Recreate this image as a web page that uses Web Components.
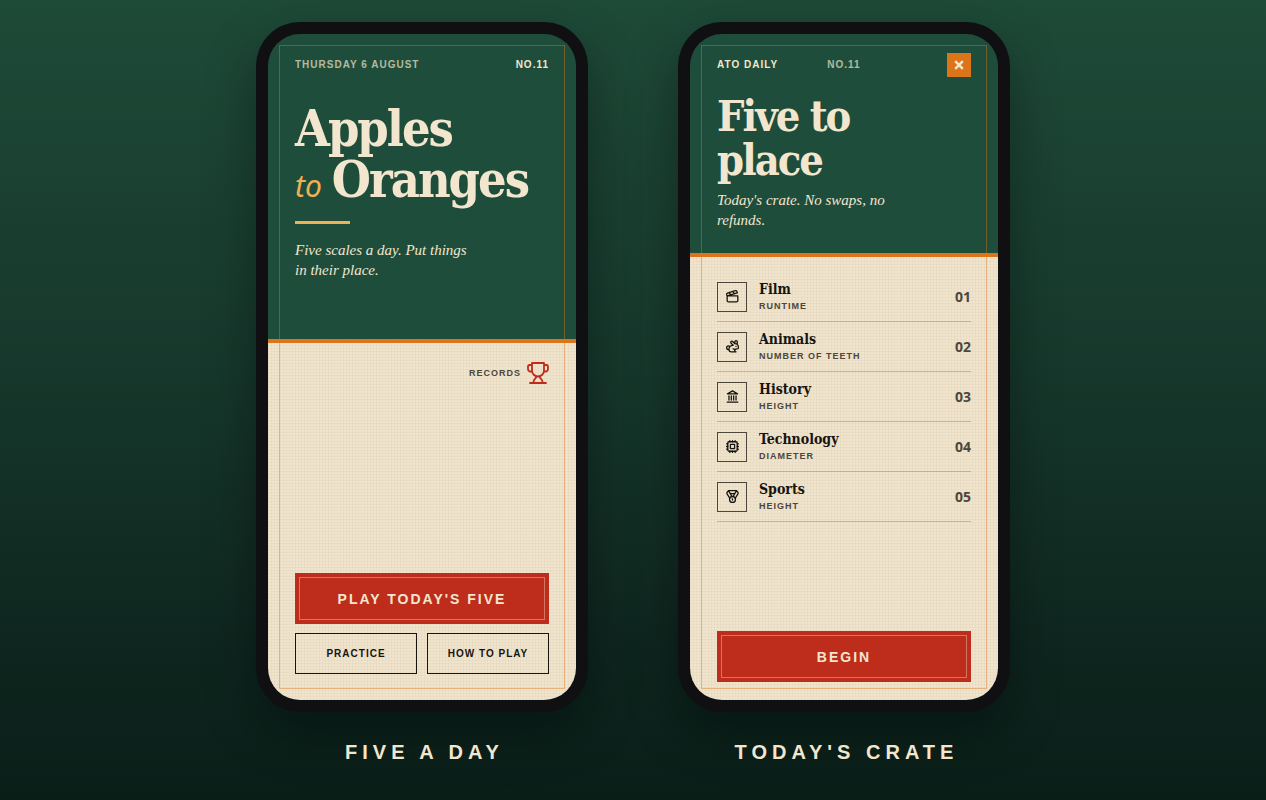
<!DOCTYPE html>
<html lang="en">
<head>
    <meta charset="UTF-8">
    <meta name="viewport" content="width=device-width, initial-scale=1.0">
    <title>Apples to Oranges</title>
    <style>
        :root {
            --green: #1f4d3b;
            --cream: #f2e6cf;
            --paper: #f0e4cd;
            --orange: #dc751a;
            --amber: #f0b055;
            --red: #be2d1b;
            --ink: #17140f;
            --soft: #4d463c;
            --slab: "DejaVu Serif Condensed", "DejaVu Serif", serif;
            --text: "Liberation Serif", serif;
            --sans: "Liberation Sans", sans-serif;
            --num: "Noto Sans", sans-serif;
        }
        body {
            margin: 0;
            min-height: 100vh;
            font-family: var(--sans);
            color: var(--cream);
            background: linear-gradient(180deg, #1e4a38 0%, #17382c 45%, #0e261f 80%, #0a1e18 100%);
        }
        .dim { opacity: .7; }
    </style>
</head>
<body>
    <template id="tmpl-showcase">
        <style>
            :host {
                display: grid;
                grid-template-columns: repeat(auto-fit, minmax(280px, 332px));
                justify-content: center;
                gap: 40px 90px;
                padding: 22px 24px 36px;
            }
        </style>
        <slot></slot>
    </template>

    <template id="tmpl-phone">
        <style>
            :host { display: block; }
            figure { margin: 0; }
            .body {
                box-sizing: border-box;
                aspect-ratio: 332 / 690;
                padding: 12px;
                border-radius: 44px;
                background: #101012;
                box-shadow: 0 20px 50px rgba(0, 0, 0, .35);
            }
            .screen {
                position: relative;
                display: flex;
                flex-direction: column;
                height: 100%;
                overflow: hidden;
                border-radius: 32px;
            }
            .screen::after {
                content: "";
                position: absolute;
                inset: 11px;
                border: 1px solid rgba(220, 117, 26, .45);
                pointer-events: none;
            }
            figcaption {
                padding: 28px 0 0 5px;
                text-align: center;
                font: bold 20px/24px var(--sans);
                letter-spacing: 5px;
                text-transform: uppercase;
            }
        </style>
        <figure>
            <div class="body"><div class="screen"><slot></slot></div></div>
            <figcaption></figcaption>
        </figure>
    </template>

    <template id="tmpl-hero">
        <style>
            :host {
                display: block;
                box-sizing: border-box;
                padding: 19px 27px 0;
                background: var(--green);
                border-bottom: 4px solid var(--orange);
                color: var(--cream);
            }
            .bar {
                display: flex;
                align-items: center;
                justify-content: space-between;
                height: 24px;
                font: bold 10px/12px var(--sans);
                letter-spacing: 1px;
            }
            :host([size="large"]) { height: 309px; }
            :host([size="small"]) { height: 223px; }
            :host([size="small"]) .bar {
                display: grid;
                grid-template-columns: 1fr auto 1fr;
            }
            :host([size="large"]) .title { padding-top: 26px; }
            :host([size="small"]) .title { padding-top: 17px; }
        </style>
        <div class="bar"><slot name="bar"></slot></div>
        <div class="title"><slot></slot></div>
    </template>

    <template id="tmpl-title">
        <style>
            :host { display: block; }
            h1 {
                margin: 0;
                font: bold 50px/51px var(--slab);
                letter-spacing: -2px;
            }
            h2 {
                margin: 0 0 8px;
                font: bold 43px/44px var(--slab);
                letter-spacing: -2px;
            }
            span { display: flex; align-items: baseline; gap: 10px; white-space: nowrap; }
            h2 span { display: block; }
            i {
                font: italic 30px/30px var(--num);
                color: var(--amber);
                letter-spacing: 0;
            }
            hr {
                width: 55px;
                height: 3px;
                margin: 16px 0;
                border: 0;
                background: var(--amber);
            }
            p {
                margin: 0;
                max-width: 180px;
                font: italic 15px/20px var(--text);
            }
        </style>
        <div></div>
    </template>

    <template id="tmpl-row">
        <style>
            :host {
                display: grid;
                grid-template-columns: 30px 1fr auto;
                column-gap: 12px;
                align-items: center;
                height: 49px;
                border-bottom: 1px solid rgba(60, 50, 40, .25);
                color: var(--ink);
            }
            .icon {
                display: grid;
                place-items: center;
                height: 28px;
                border: 1px solid var(--soft);
            }
            h3 { margin: 0; font: bold 14px/19px var(--slab); }
            p {
                margin: 0;
                font: bold 9px/15px var(--sans);
                letter-spacing: 1px;
                color: var(--soft);
                text-transform: uppercase;
            }
            b { font: bold 14px/20px var(--num); color: var(--soft); }
        </style>
        <div class="icon"><ui-icon></ui-icon></div>
        <div><h3></h3><p></p></div>
        <b></b>
    </template>

    <template id="tmpl-button">
        <style>
            :host { display: block; flex: 1; }
            button {
                display: block;
                box-sizing: border-box;
                width: 100%;
                height: 41px;
                padding: 0;
                border: 1px solid var(--ink);
                background: none;
                color: var(--ink);
                font: bold 10px/12px var(--sans);
                letter-spacing: 1px;
                text-transform: uppercase;
            }
            :host([primary]) button {
                height: 51px;
                border: 0;
                background: var(--red);
                outline: 1px solid rgba(242, 230, 207, .4);
                outline-offset: -5px;
                color: var(--cream);
                font: bold 14px/16px var(--sans);
                letter-spacing: 2px;
            }
            :host([close]) { flex: none; justify-self: end; }
            :host([close]) button {
                display: grid;
                place-items: center;
                width: 24px;
                height: 24px;
                border: 0;
                background: var(--orange);
                color: var(--cream);
            }
        </style>
        <button type="button"><slot></slot></button>
    </template>

    <template id="tmpl-panel">
        <style>
            :host {
                display: flex;
                flex: 1;
                flex-direction: column;
                justify-content: space-between;
                padding: 15px 27px 18px;
                background:
                    repeating-linear-gradient(0deg, rgba(110, 80, 30, .04) 0 1px, transparent 1px 3px),
                    repeating-linear-gradient(90deg, rgba(110, 80, 30, .04) 0 1px, transparent 1px 3px),
                    var(--paper);
            }
            :host([home]) { padding: 19px 27px 26px; }
            .actions { display: grid; gap: 9px; }
        </style>
        <div><slot></slot></div>
        <div class="actions"><slot name="actions"></slot></div>
    </template>

    <template id="tmpl-records">
        <style>
            :host { display: flex; justify-content: flex-end; }
            a {
                display: flex;
                align-items: center;
                gap: 6px;
                color: var(--soft);
                font: bold 9px/12px var(--sans);
                letter-spacing: 1px;
                text-decoration: none;
            }
            ui-icon { color: var(--red); }
        </style>
        <a href="#records"><slot></slot><ui-icon name="trophy" size="22"></ui-icon></a>
    </template>

    <template id="tmpl-pair">
        <style>
            :host { display: flex; gap: 10px; }
        </style>
        <slot></slot>
    </template>

    <ato-showcase>
        <ato-phone caption="Five a day">
            <ato-hero size="large">
                <span slot="bar" class="dim">THURSDAY 6 AUGUST</span>
                <span slot="bar">NO.11</span>
                <ato-title kind="cover" lede="Five scales a day. Put things in their place."></ato-title>
            </ato-hero>
            <ato-panel home>
                <ato-records>RECORDS</ato-records>
                <ato-button slot="actions" primary>Play today's five</ato-button>
                <ato-pair slot="actions">
                    <ato-button>Practice</ato-button>
                    <ato-button>How to play</ato-button>
                </ato-pair>
            </ato-panel>
        </ato-phone>

        <ato-phone caption="Today's crate">
            <ato-hero size="small">
                <span slot="bar">ATO DAILY</span>
                <span slot="bar" class="dim">NO.11</span>
                <ato-button slot="bar" close label="Close"><ui-icon name="close" size="12"></ui-icon></ato-button>
                <ato-title lede="Today's crate. No swaps, no refunds."></ato-title>
            </ato-hero>
            <ato-panel>
                <ato-row icon="film" name="Film" measure="Runtime" number="01"></ato-row>
                <ato-row icon="rabbit" name="Animals" measure="Number of teeth" number="02"></ato-row>
                <ato-row icon="landmark" name="History" measure="Height" number="03"></ato-row>
                <ato-row icon="chip" name="Technology" measure="Diameter" number="04"></ato-row>
                <ato-row icon="medal" name="Sports" measure="Height" number="05"></ato-row>
                <ato-button slot="actions" primary>Begin</ato-button>
            </ato-panel>
        </ato-phone>
    </ato-showcase>
</body>
<script>
    const icons = {
        close: '<path d="M5 5l14 14M19 5L5 19" stroke-width="4.5" stroke-linecap="butt"/>',
        trophy: '<path stroke-width="1.8" d="M6 2h12v7.500a6 6 0 0 1-12 0zM6 4H3.500A1.500 1.500 0 0 0 2 5.500V8a2.500 2.500 0 0 0 2.500 2.500H6M18 4h2.500A1.500 1.500 0 0 1 22 5.500V8a2.500 2.500 0 0 1-2.500 2.500H18M10.300 15.500c0 2.500-3 2.500-3 6M13.700 15.500c0 2.500 3 2.500 3 6M4 22h16"/>',
        film: '<path d="M20.200 6L3 11l-.9-2.400c-.3-1.100.3-2.200 1.300-2.500l13.500-4c1.100-.3 2.200.3 2.500 1.300zM6.200 5.300l3.100 3.900M12.400 3.400l3.100 4M3 11h18v8a2 2 0 0 1-2 2H5a2 2 0 0 1-2-2z"/>',
        rabbit: '<path d="M13 16a3 3 0 0 1 2.240 5M18 12h.01M18 21h-8a4 4 0 0 1-4-4 7 7 0 0 1 7-7h.2L9.600 6.400a1 1 0 1 1 2.800-2.800L15.800 7h.2c3.300 0 6 2.700 6 6v1a2 2 0 0 1-2 2h-1a3 3 0 0 0-3 3M20 8.540V4a2 2 0 1 0-4 0v3M7.612 12.524a3 3 0 1 0-1.600 4.300"/>',
        landmark: '<path d="M3 21.500h18M6 18v-7M10 18v-7M14 18v-7M18 18v-7M12 2.500l8.500 5h-17z"/>',
        chip: '<rect x="4" y="4" width="16" height="16" rx="2"/><rect x="8.500" y="8.500" width="7" height="7"/><path d="M7.500 2v2M12 2v2M16.500 2v2M7.500 20v2M12 20v2M16.500 20v2M2 7.500h2M2 12h2M2 16.500h2M20 7.500h2M20 12h2M20 16.500h2"/>',
        medal: '<path d="M7.210 15L2.660 7.140a2 2 0 0 1 .13-2.200L4.400 2.800A2 2 0 0 1 6 2h12a2 2 0 0 1 1.600.8l1.600 2.140a2 2 0 0 1 .14 2.200L16.790 15M11 12L5.120 2.200M13 12l5.880-9.800M8 7h8"/><circle cx="12" cy="17" r="5"/><path d="M12 18v-2h-.5"/>'
    };

    const stamp = (el, id) => {
        const root = el.attachShadow({mode: 'open'});
        root.append(document.getElementById(id).content.cloneNode(true));
        return root;
    };

    const define = (name, id) => {
        customElements.define(name, class extends HTMLElement {
            connectedCallback() {
                stamp(this, id);
            }
        });
    };

    customElements.define('ui-icon', class extends HTMLElement {
        connectedCallback() {
            const size = this.getAttribute('size') || 13;
            this.attachShadow({mode: 'open'}).innerHTML = `
              <style>
              :host { display: block; }
              svg { display: block; }
              </style>
              <svg width="${size}" height="${size}" viewBox="1 1 22 22" fill="none" stroke="currentColor"
                stroke-width="2.200" stroke-linecap="round" stroke-linejoin="round" overflow="visible" aria-hidden="true">
                ${icons[this.getAttribute('name')] || ''}
              </svg>
            `;
        }
    });

    define('ato-showcase', 'tmpl-showcase');
    define('ato-hero', 'tmpl-hero');
    define('ato-panel', 'tmpl-panel');
    define('ato-records', 'tmpl-records');
    define('ato-pair', 'tmpl-pair');

    customElements.define('ato-phone', class extends HTMLElement {
        connectedCallback() {
            stamp(this, 'tmpl-phone').querySelector('figcaption').textContent = this.getAttribute('caption');
        }
    });

    customElements.define('ato-title', class extends HTMLElement {
        connectedCallback() {
            const heading = this.getAttribute('kind') === 'cover'
                ? '<h1><span>Apples</span><span><i>to</i> Oranges</span></h1><hr>'
                : '<h2><span>Five to</span><span>place</span></h2>';
            stamp(this, 'tmpl-title').querySelector('div').innerHTML = `${heading}<p>${this.getAttribute('lede')}</p>`;
        }
    });

    customElements.define('ato-button', class extends HTMLElement {
        connectedCallback() {
            const root = stamp(this, 'tmpl-button');
            if (this.hasAttribute('label')) {
                root.querySelector('button').setAttribute('aria-label', this.getAttribute('label'));
            }
        }
    });

    customElements.define('ato-row', class extends HTMLElement {
        connectedCallback() {
            // the icon reads its name when it connects, so fill the clone first
            const row = document.getElementById('tmpl-row').content.cloneNode(true);
            row.querySelector('ui-icon').setAttribute('name', this.getAttribute('icon'));
            row.querySelector('h3').textContent = this.getAttribute('name');
            row.querySelector('p').textContent = this.getAttribute('measure');
            row.querySelector('b').textContent = this.getAttribute('number');
            this.attachShadow({mode: 'open'}).append(row);
        }
    });
</script>
</html>
